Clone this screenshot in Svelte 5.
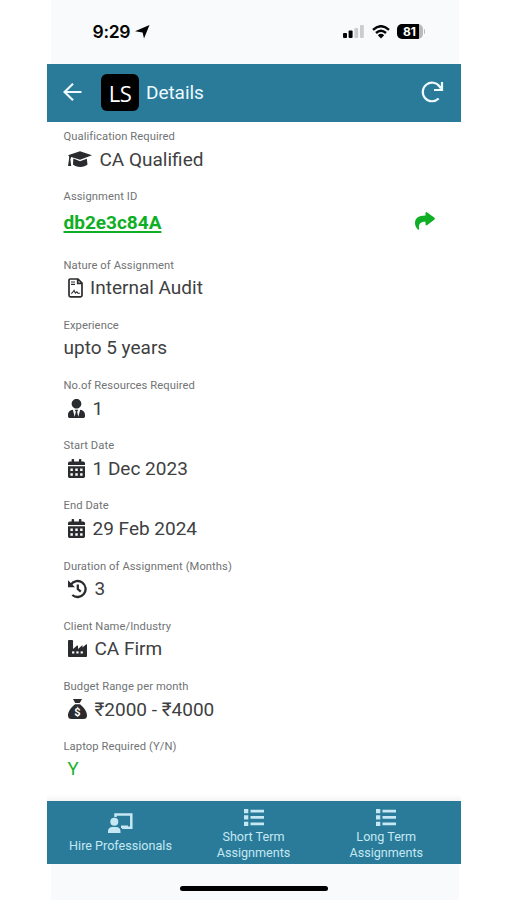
<script>
	const fields = [
		{ label: 'Qualification Required', value: 'CA Qualified', icon: 'graduate', width: 24, gap: 8 },
		{ label: 'Assignment ID', value: 'db2e3c84A', link: true },
		{ label: 'Nature of Assignment', value: 'Internal Audit', icon: 'file', width: 15, gap: 7.5 },
		{ label: 'Experience', value: 'upto 5 years' },
		{ label: 'No.of Resources Required', value: '1', icon: 'user', width: 17, gap: 8 },
		{ label: 'Start Date', value: '1 Dec 2023', icon: 'calendar', width: 17, gap: 8 },
		{ label: 'End Date', value: '29 Feb 2024', icon: 'calendar', width: 17, gap: 8 },
		{ label: 'Duration of Assignment (Months)', value: '3', icon: 'history', width: 19, gap: 8 },
		{ label: 'Client Name/Industry', value: 'CA Firm', icon: 'factory', width: 19, gap: 8 },
		{ label: 'Budget Range per month', value: '₹2000 - ₹4000', icon: 'money', width: 19, gap: 8 },
		{ label: 'Laptop Required (Y/N)', value: 'Y', flag: true }
	];
	const windows = [110, 225, 340];
</script>

{#snippet icon(name)}
	{#if name === 'graduate'}
		<svg width="24" height="16" viewBox="0 0 24 16">
			<path d="M12 .3 24 4.200 12 8.800 3.200 5.900 2.400 8.400 3.200 15H0l1-6.600.2-3.200L0 4.200zM5.300 7.600 12 10.200l6.800-2.500.7 5.800c-3 3.200-11.500 3.200-14.500 0z" />
		</svg>
	{:else if name === 'file'}
		<svg class="outline" width="15" height="20" viewBox="0 0 15 20">
			<path d="M2.200 1H10l4 4v12.300q0 1.500-1.500 1.500h-10Q1 18.800 1 17.300V2.200Q1 1 2.200 1ZM9.700 1.300v4h4" />
			<path class="thin" d="M3 4h4M3 6.400h4M3.300 15.700 5 14l1.100-1.700 1.300 2.900 1.500-1.300 1 1.300h2" />
		</svg>
	{:else if name === 'user'}
		<svg width="17" height="19" viewBox="0 0 448 512" preserveAspectRatio="none">
			<path d="M224 256c71 0 128-57 128-128S295 0 224 0 96 57 96 128s57 128 128 128zm96 33-48 191-32-136 32-56h-96l32 56-32 136-48-191C57 292 0 350 0 422v42c0 27 21 48 48 48h352c27 0 48-21 48-48v-42c0-72-57-130-128-133z" />
		</svg>
	{:else if name === 'calendar'}
		<svg width="17" height="19" viewBox="0 0 448 512" preserveAspectRatio="none">
			<path fill-rule="evenodd" d="M0 192h448v272c0 27-21 48-48 48H48c-27 0-48-21-48-48zM64 256v64h64v-64zm128 0v64h64v-64zm128 0v64h64v-64zM64 384v64h64v-64zm128 0v64h64v-64zm128 0v64h64v-64zM400 64h-48V12q0-12-12-12h-40q-12 0-12 12v52H160V12q0-12-12-12h-40Q96 0 96 12v52H48Q0 64 0 112v48h448v-48q0-48-48-48z" />
		</svg>
	{:else if name === 'history'}
		<svg class="outline" width="19" height="20" viewBox="0 0 19 20">
			<path class="thick" d="M3 5.500A8 8 0 1 1 4.300 16M9.800 5.500V10l3 2.600" />
			<path class="solid" d="M0 1.300v7h7z" />
		</svg>
	{:else if name === 'factory'}
		<svg width="19" height="17" viewBox="0 0 512 448" preserveAspectRatio="none">
			<path d="M24 0h88q24 0 24 24v210l100-84q34-22 34 14v70l100-84 100-56q42-20 42 24v306q0 24-24 24H24q-24 0-24-24V24Q0 0 24 0z" />
			<path class="hole" d="M390 30h122v80L390 200z" />
			<path d="M380 210 480 126q32-20 32 14v150H380z" />
			{#each windows as x}
				<rect class="hole" {x} y="300" width="60" height="56" />
			{/each}
		</svg>
	{:else if name === 'money'}
		<svg width="19" height="20" viewBox="0 0 19 20">
			<path d="M5 0h9l-2.200 4H7.200zM7 5.200h5c3.800 3 7 7.200 7 11.300 0 2.400-1.300 3.500-3.500 3.500h-12C1.300 20 0 18.900 0 16.500 0 12.400 3.200 8.200 7 5.200z" />
			<text x="9.500" y="16.500" text-anchor="middle">$</text>
		</svg>
	{/if}
{/snippet}

{#snippet list()}
	<svg width="20" height="17" viewBox="0 0 20 17">
		<path d="M0 0h4.300v4.300H0zM0 6.300h4.300v4.300H0zM0 12.700h4.300V17H0zM6.500.8H20v2.700H6.500zM6.500 7.100H20v2.700H6.500zM6.500 13.500H20v2.700H6.500z" />
	</svg>
{/snippet}

<div class="phone">
	<div class="status">
		<span class="time">9:29</span>
		<svg class="location" width="15" height="14" viewBox="0 0 15 14"><path d="M14.500 0 9 13.600 7.600 7.500 0 6.300z" /></svg>
		<svg class="signal" width="21" height="13" viewBox="0 0 21 13">
			<rect y="8" width="4" height="5" rx="1" />
			<rect x="5.600" y="5.500" width="4" height="7.500" rx="1" />
			<rect class="off" x="11.400" y="3" width="3.800" height="10" rx="1" />
			<rect class="off" x="17" width="3.800" height="13" rx="1" />
		</svg>
		<svg class="wifi" width="18" height="14" viewBox="0 0 18 14">
			<path class="arc" d="M1 4.800Q9-2.400 17 4.800M4 8Q9 3.500 14 8" />
			<path d="M5.800 10.200Q9 7.300 12.200 10.200L9 13.500z" />
		</svg>
		<span class="battery">81</span>
		<i class="cap"></i>
	</div>

	<header>
		<svg class="back" width="19" height="18" viewBox="0 0 19 18"><path d="M18.500 9H1.700M10 .8 1.500 9l8.500 8.200" /></svg>
		<span class="logo">LS</span>
		<h1>Details</h1>
		<svg class="refresh" width="23" height="22" viewBox="0 0 23 22">
			<path d="M17.700 17.500A9.300 9.300 0 1 1 18.600 5.500L20 7.500" />
			<path d="M21 1v8h-8" />
		</svg>
	</header>

	<main>
		{#each fields as field}
			<div class="field" class:linked={field.link}>
				<span class="label">{field.label}</span>
				<div class="value" class:flag={field.flag}>
					{#if field.icon}
						<span class="icon" style="width: {field.width}px; margin-right: {field.gap}px">
							{@render icon(field.icon)}
						</span>
					{/if}
					<span class:link={field.link}>{field.value}</span>
					{#if field.link}
						<svg class="share" width="20" height="18" viewBox="0 0 20 18">
							<path d="M11.500 0q-1 0-1 1v2.500C3 3.500 0 6.500 0 11c0 2.800 1.300 5 3 6.500.8.600 1.400.1 1.100-.7C3.300 12 5.500 9.700 10.500 9.700v3q.2 1 1.500.500L19.500 7.400q.8-.8 0-1.600z" />
						</svg>
					{/if}
				</div>
			</div>
		{/each}
	</main>

	<nav>
		<div class="tab hire">
			<svg width="25" height="20" viewBox="0 0 25 20">
				<path class="board" d="M7.500 4V1.400h15.800v13.400H14" />
				<circle cx="6.300" cy="8.700" r="4" />
				<path d="M0 20v-1.500Q0 14 4.500 14H8q4.500 0 4.500 4.500V20zM13 15v-2.500h7V15z" />
			</svg>
			<span>Hire Professionals</span>
		</div>
		<div class="tab">
			{@render list()}
			<span>Short Term<br />Assignments</span>
		</div>
		<div class="tab">
			{@render list()}
			<span>Long Term<br />Assignments</span>
		</div>
	</nav>

	<div class="home"><i></i></div>
</div>

<style>
	:global(body) {
		background: #fff;
	}

	.phone {
		display: flex;
		flex-direction: column;
		width: 414.5px;
		height: 900px;
		margin-left: 46.5px;
		overflow: hidden;
		font-family: Roboto, 'Noto Sans', sans-serif;
		color: #3e4042;
	}

	svg {
		display: block;
		flex: none;
		fill: currentColor;
	}

	.status {
		display: flex;
		align-items: center;
		flex: none;
		height: 63.5px;
		margin: 0 2px 0 4px;
		padding-left: 42px;
		box-sizing: border-box;
		background: #f9fafb;
		color: #050505;
	}

	.time {
		width: 40px;
		font: 600 17.5px Inter, sans-serif;
		letter-spacing: -0.3px;
	}

	.location {
		margin-left: 2px;
	}

	.signal {
		margin-left: 193px;
	}

	.off {
		fill: #ccc;
	}

	.wifi {
		margin-left: 8px;
	}

	.arc {
		fill: none;
		stroke: currentColor;
		stroke-width: 2.4;
	}

	.battery {
		width: 26px;
		height: 15px;
		margin-left: 7px;
		border-radius: 5px;
		background: linear-gradient(90deg, #000 83%, #b8b9ba 83%);
		color: #fff;
		font: 700 12px/15px Inter, sans-serif;
		text-align: center;
	}

	.cap {
		width: 1.5px;
		height: 5px;
		margin-left: 1px;
		border-radius: 0 2px 2px 0;
		background: #bbb;
	}

	header {
		display: flex;
		align-items: center;
		flex: none;
		height: 58.5px;
		padding: 0 17px 0 16px;
		box-sizing: border-box;
		background: #2a7b99;
		color: #edfaff;
	}

	.back,
	.refresh {
		fill: none;
		stroke: currentColor;
		stroke-width: 2.2;
	}

	.back {
		margin-top: -1px;
	}

	.refresh {
		margin: -1px 0 0 auto;
	}

	.logo {
		width: 38px;
		height: 37px;
		margin: 0 7px 0 19.5px;
		border-radius: 6px;
		background: #000;
		color: #fff;
		font: 22px/38px 'Open Sans', sans-serif;
		letter-spacing: -0.4px;
		text-align: center;
	}

	h1 {
		margin: -1px 0 0;
		font-size: 19px;
		font-weight: 400;
		letter-spacing: -0.05px;
	}

	main {
		flex: none;
		height: 678.5px;
		padding: 7px 17px 0;
		box-sizing: border-box;
		background: linear-gradient(#fff 99%, #f4f4f4);
	}

	.field {
		height: 60.2px;
	}

	.label {
		display: block;
		height: 15px;
		font-size: 11.2px;
		line-height: 15px;
		letter-spacing: 0.08px;
		color: #717375;
	}

	.value {
		display: flex;
		align-items: center;
		height: 30px;
		font-size: 19px;
	}

	.linked {
		height: 68.5px;
	}

	.linked .value {
		height: 37px;
	}

	.link {
		color: #0eaf24;
		font-weight: 700;
		text-decoration: underline;
		text-decoration-thickness: 2px;
		text-underline-offset: 2px;
	}

	.share {
		margin: -4px 9px 0 auto;
		color: #0eaf24;
	}

	.flag {
		padding-left: 4px;
		color: #1bb331;
		font-size: 18.5px;
	}

	.icon {
		margin-left: 4px;
		color: #292b2e;
	}

	.outline {
		fill: none;
		stroke: currentColor;
		stroke-width: 1.7;
	}

	.thin {
		stroke-width: 1.1;
	}

	.thick {
		stroke-width: 2.3;
	}

	.solid {
		fill: currentColor;
		stroke: none;
	}

	.hole {
		fill: #fff;
	}

	.icon text {
		fill: #fff;
		font-size: 11px;
		font-weight: 700;
	}

	nav {
		display: grid;
		grid-template-columns: 148px 118px 147.5px;
		flex: none;
		height: 63.5px;
		background: #2a7b99;
		color: #c5e8f4;
		font-size: 12.6px;
		line-height: 16px;
		text-align: center;
	}

	.tab {
		display: flex;
		flex-direction: column;
		align-items: center;
		gap: 3.5px;
		padding-top: 8px;
	}

	.hire {
		padding-top: 12px;
		gap: 5px;
	}

	.board {
		fill: none;
		stroke: currentColor;
		stroke-width: 2.5;
	}

	.home {
		flex: 1;
		margin: 0 2px 0 4px;
		background: #f9fafc;
	}

	.home i {
		display: block;
		width: 148px;
		height: 5px;
		margin: 22px auto 0 129.5px;
		border-radius: 3px;
		background: #000;
	}
</style>
